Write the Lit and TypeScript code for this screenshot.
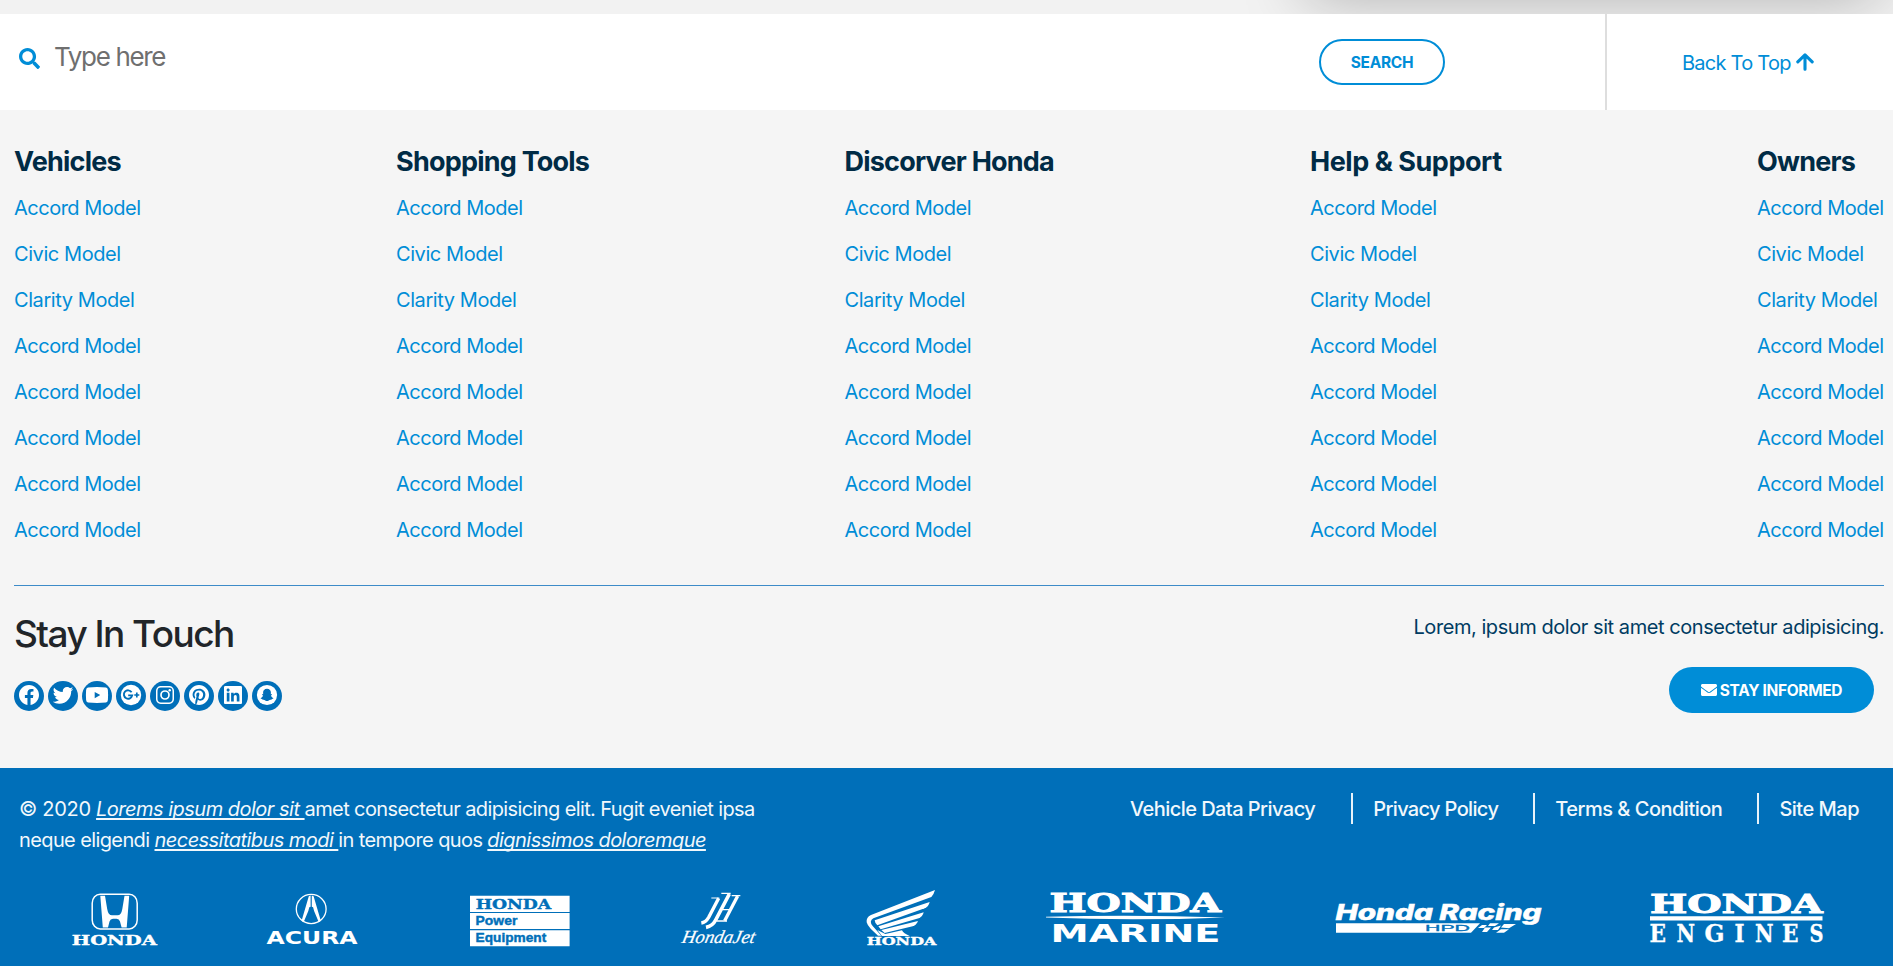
import { LitElement, html, svg, css } from "lit";
import { customElement } from "lit/decorators.js";

const MODELS = ["Accord Model", "Civic Model", "Clarity Model", "Accord Model", "Accord Model", "Accord Model", "Accord Model", "Accord Model"];
const COLUMNS = ["Vehicles", "Shopping Tools", "Discorver Honda", "Help & Support", "Owners"];
const LEGAL = ["Vehicle Data Privacy", "Privacy Policy", "Terms & Condition", "Site Map"];

const BLUE = "#006fb9";

const word = (t: string, x: number, y: number, w: number, size: number, cls: string) =>
  svg`<text class=${cls} x=${x} y=${y} font-size=${size} textLength=${w} lengthAdjust="spacingAndGlyphs">${t}</text>`;

const SOCIAL = [
  svg`<svg x="5" y="4" width="20" height="20" viewBox="8 8 496 496"><path d="M504 256C504 119 393 8 256 8S8 119 8 256c0 123.78 90.69 226.38 209.25 245V327.69h-63V256h63v-54.64c0-62.15 37-96.48 93.67-96.48 27.14 0 55.52 4.84 55.52 4.84v61h-31.28c-30.8 0-40.41 19.12-40.41 38.73V256h68.78l-11 71.69h-57.78V501C413.31 482.38 504 379.78 504 256z"/></svg>`,
  svg`<svg x="4.7" y="4" width="20.6" height="20.6" viewBox="0 0 512 512"><path d="M459.37 151.716c.325 4.548.325 9.097.325 13.645 0 138.72-105.583 298.558-298.558 298.558-59.452 0-114.68-17.219-161.137-47.106 8.447.974 16.568 1.299 25.34 1.299 49.055 0 94.213-16.568 130.274-44.832-46.132-.975-84.792-31.188-98.112-72.772 6.498.974 12.995 1.624 19.818 1.624 9.421 0 18.843-1.3 27.614-3.573-48.081-9.747-84.143-51.98-84.143-102.985v-1.299c13.969 7.797 30.214 12.67 47.431 13.319-28.264-18.843-46.781-51.005-46.781-87.391 0-19.492 5.197-37.36 14.294-52.954 51.655 63.675 129.3 105.258 216.365 109.807-1.624-7.797-2.599-15.918-2.599-24.04 0-57.828 46.782-104.934 104.934-104.934 30.213 0 57.502 12.67 76.67 33.137 23.715-4.548 46.456-13.32 66.599-25.34-7.798 24.366-24.366 44.833-46.132 57.827 21.117-2.273 41.584-8.122 60.426-16.243-14.292 20.791-32.161 39.308-52.628 54.253z"/></svg>`,
  svg`<path d="M6 6.5Q15 5.5 24 6.5Q25.7 6.8 25.9 9Q26.3 14 25.9 19Q25.7 21.3 24 21.6Q15 22.4 6 21.6Q4.3 21.3 4.1 19Q3.7 14 4.1 9Q4.3 6.8 6 6.5ZM12.7 10.9V17.3L18.3 14.1Z" fill-rule="evenodd"/>`,
  svg`<circle cx="15" cy="14" r="10.2"/><path d="M15.6 11.2A4.2 4.2 0 1 0 16.2 14.4H12.2" fill="none" stroke=${BLUE} stroke-width="1.9"/><path d="M18.3 14H23.3M20.8 11.5V16.5" stroke=${BLUE} stroke-width="1.7"/>`,
  svg`<path fill-rule="evenodd" d="M10.7 5H19.3A4.7 4.7 0 0 1 24 9.7V18.3A4.7 4.7 0 0 1 19.3 23H10.7A4.7 4.7 0 0 1 6 18.3V9.7A4.7 4.7 0 0 1 10.7 5ZM10.9 6.5A3.4 3.4 0 0 0 7.5 9.9V18.1A3.4 3.4 0 0 0 10.9 21.5H19.1A3.4 3.4 0 0 0 22.5 18.1V9.9A3.4 3.4 0 0 0 19.1 6.5Z"/><circle cx="15" cy="14" r="4" fill="none" stroke="#fff" stroke-width="1.7"/><circle cx="19.7" cy="9.2" r="1.2"/>`,
  svg`<svg x="5" y="4" width="20" height="20" viewBox="0 8 496 496"><path d="M496 256c0 137-111 248-248 248-25.6 0-50.2-3.9-73.4-11.1 10.1-16.5 25.2-43.5 30.8-65 3-11.6 15.4-59 15.4-59 8.1 15.4 31.7 28.5 56.8 28.5 74.8 0 128.7-68.8 128.7-154.3 0-81.9-66.9-143.2-152.9-143.2-107 0-163.9 71.8-163.9 150.1 0 36.4 19.4 81.7 50.3 96.1 4.7 2.2 7.2 1.2 8.3-3.3.8-3.4 5-20.3 6.9-28.1.6-2.5.3-4.7-1.7-7.1-10.1-12.5-18.3-35.3-18.3-56.6 0-54.7 41.4-107.6 112-107.6 60.9 0 103.6 41.5 103.6 100.9 0 67.1-33.9 113.6-78 113.6-24.3 0-42.6-20.1-36.7-44.8 7-29.5 20.5-61.3 20.5-82.6 0-19-10.2-34.9-31.4-34.9-24.9 0-44.9 25.7-44.9 60.2 0 22 7.4 36.8 7.4 36.8s-24.5 103.8-29 123.2c-5 21.4-3 51.6-.9 71.2C65.4 450.9 0 361.1 0 256 0 119 111 8 248 8s248 111 248 248z"/></svg>`,
  svg`<svg x="6" y="5" width="18" height="18" viewBox="0 32 448 448"><path d="M416 32H31.9C14.3 32 0 46.5 0 64.3v383.4C0 465.5 14.3 480 31.9 480H416c17.6 0 32-14.5 32-32.3V64.3c0-17.8-14.4-32.3-32-32.3zM135.4 416H69V202.2h66.5V416zm-33.2-243c-21.3 0-38.5-17.3-38.5-38.5S80.9 96 102.2 96c21.2 0 38.5 17.3 38.5 38.5 0 21.3-17.2 38.5-38.5 38.5zm282.1 243h-66.4V312c0-24.8-.5-56.7-34.5-56.7-34.6 0-39.9 27-39.9 54.9V416h-66.4V202.2h63.7v29.2h.9c8.9-16.8 30.6-34.5 62.9-34.5 67.2 0 79.7 44.3 79.7 101.9V416z"/></svg>`,
  svg`<circle cx="15" cy="14" r="10.1"/><path fill=${BLUE} d="M15 7.8C17.6 7.8 18.9 9.6 18.9 11.6L18.8 13.3L20 13.2C20.3 13.7 19.7 14 18.9 14.4C19.2 15.6 20.2 16.6 21.4 17C21.4 17.7 20.3 17.9 19.7 18L19.3 18.9C18.3 18.6 17.6 18.8 16.8 19.4C15.6 20.2 14.4 20.2 13.2 19.4C12.4 18.8 11.7 18.6 10.7 18.9L10.3 18C9.7 17.9 8.6 17.7 8.6 17C9.8 16.6 10.8 15.6 11.1 14.4C10.3 14 9.7 13.7 10 13.2L11.2 13.3L11.1 11.6C11.1 9.6 12.4 7.8 15 7.8Z"/>`,
];

/* Each badge occupies one cell of the strip; [left edge, width, drawing]. */
const LOGOS: [number, number, unknown][] = [
  [0, 210, svg`<rect x="92.2" y="894.2" width="45" height="34.8" rx="8" ry="9" fill="none" stroke="#fff" stroke-width="1.5"/>
    <path d="M100.3 895.8H105L107.2 909Q108.2 915.3 112 915.3H117.5Q121.3 915.3 122.3 909L124.5 895.8H129.2L126.7 927.5H121.6L120 921.5Q119.2 918.8 116.5 918.8H113Q110.3 918.8 109.5 921.5L108 927.5H102.8Z"/>
    ${word("HONDA", 71.8, 945, 85, 12.5, "slab")}`],
  [210, 210, svg`<ellipse cx="311.2" cy="909" rx="14.9" ry="14.6" fill="none" stroke="#fff" stroke-width="1.3"/>
    <path d="M308.8 896.3L310.6 895.5V906.8L309.3 907.2L308.3 911L303.6 922.2L301.6 920.8ZM313.6 896.3L311.8 895.5V906.8L313.1 907.2L314.1 911L318.8 922.2L320.8 920.8Z"/>
    ${word("ACURA", 266.5, 944.2, 91, 18.5, "wide")}`],
  [420, 210, svg`<path d="M470 895.7H569.6V911.9H470ZM470 913.1H569.6V929.1H470ZM470 930.2H569.6V946.3H470Z"/>
    <g fill=${BLUE}>${word("HONDA", 475.7, 909, 75.5, 12.3, "slab ink")}${word("Power", 475.6, 925.3, 41.7, 12.2, "grot")}${word("Equipment", 475.6, 942, 70.6, 12.2, "grot")}</g>`],
  [630, 175, svg`<g transform="translate(450 880) scale(.33333)" fill="none" stroke="#fff">
      <path d="M806 55L776 112Q767 127 754 129" stroke-width="10"/><path d="M784 54H808M814 40H842M845 47H871" stroke-width="3.5"/>
      <path d="M838 42L797 120Q788 138 768 142" stroke-width="11"/><path d="M863 48L824 122" stroke-width="10"/><path d="M800 123H831M818 89H842" stroke-width="4"/></g>
    <g transform="translate(681 942.7) skewX(-12)">${word("HondaJet", 0, 0, 73, 18.5, "script")}</g>`],
  [805, 185, svg`<g transform="translate(840 880) scale(.33333)">
      <path d="M285 30L93 105Q78 112 80 127Q82 136 92 146L114 167H124L98 138Q86 124 100 115L274 51Q282 42 285 30Z"/>
      <path d="M269 66Q266 80 254 85L112 136Q104 127 104 121Z"/>
      <path d="M251 97Q248 111 236 115L122 148L115 139Z"/>
      <path d="M234 123Q230 135 218 139L134 159L124 150Z"/>
      <path d="M136 162L186 151Q190 160 209 168H126L112 150Z"/></g>
    ${word("HONDA", 866.7, 944.8, 69.6, 10.8, "slab")}`],
  [990, 290, svg`${word("HONDA", 1049.5, 911.9, 171.5, 26.6, "slab bold")}
    <path d="M1046 916.7Q1135 914.3 1225 917.4Q1135 921 1046 917.6Z"/>
    ${word("MARINE", 1050.5, 942, 170, 24.3, "wide")}`],
  [1280, 320, svg`${word("Honda Racing", 1335.5, 920.2, 206, 21, "race")}
    <path d="M1336 923.2H1480L1471 932.7H1336Z"/>
    <g fill=${BLUE} stroke=${BLUE}>${word("HPD", 1425, 931.2, 45, 9.8, "thin")}</g>
    <path d="M1482 925H1487L1484 928H1478ZM1490 923.2H1499L1495 926H1488ZM1504 924H1516L1509 928.3L1501 927.5ZM1485 927.5H1491L1487 932H1482ZM1494 927.5L1501 925.5L1498 930H1492ZM1501 929.3H1509L1504 932.7H1496Z"/>`],
  [1600, 293, svg`${word("HONDA", 1650, 912.6, 172.5, 26.9, "slab bold")}<path d="M1650 916.3H1822.5V920.4H1650Z"/>
    ${word("E", 1649.5, 942, 16.5, 25, "slab")}${word("N", 1676.5, 942, 18.5, 25, "slab")}${word("G", 1704.5, 942, 20, 25, "slab")}${word("I", 1734.5, 942, 10, 25, "slab")}${word("N", 1755, 942, 18.5, 25, "slab")}${word("E", 1782, 942, 16.5, 25, "slab")}${word("S", 1809.5, 942, 14, 25, "slab")}`],
];

@customElement("app-root")
export class AppRoot extends LitElement {
  static styles = css`
    :host { display: block; width: 1893px; height: 966px; overflow: hidden; background: #f5f5f5; font-family: Inter, "Liberation Sans", sans-serif; color: #212529; }
    * { box-sizing: border-box; }
    a { color: inherit; text-decoration: none; white-space: nowrap; }
    svg { display: block; }
    .edge { height: 14px; background: #f2f2f2; position: relative; overflow: hidden; }
    .edge::before { content: ""; position: absolute; left: 1306px; right: 14px; top: -150px; height: 148px; box-shadow: 0 0 64px rgba(0, 0, 0, .28); }
    .bar { height: 96px; background: #fff; display: flex; }
    .find { width: 1605px; padding: 0 160px 0 19px; display: flex; align-items: center; }
    .find svg { width: 21px; height: 21px; fill: #008dd7; margin: -8px 14px 0 0; }
    .hint { flex: 1; font-size: 26px; color: #6f6f6f; line-height: 32px; margin-top: -11px; letter-spacing: -1.35px; }
    .search { width: 126px; height: 46px; border: 2px solid #008dd7; border-radius: 23px; background: #fff; color: #008dd7; font: 700 15.5px Inter, sans-serif; padding: 0; letter-spacing: -.3px; }
    .top { flex: 1; border-left: 2px solid #dedede; color: #008dd7; font-size: 20px; display: flex; align-items: center; padding: 2px 0 0 75px; gap: 5px; letter-spacing: -.75px; }
    .top svg { width: 18px; height: 18px; margin-top: -2px; }
    .cols { display: grid; grid-template-columns: 382px 448.5px 465.5px 447px 1fr; padding: 35px 9px 0 14px; height: 475px; }
    h3 { margin: 0 0 15px; font-size: 27px; line-height: 33px; font-weight: 700; color: #002b45; white-space: nowrap; letter-spacing: -.78px; }
    .cols div:nth-child(4) h3 { letter-spacing: -.46px; }
    ul { list-style: none; margin: 0; padding: 0; }
    .cols li { height: 46px; line-height: 30px; font-size: 20px; color: #008dd7; letter-spacing: -.5px; }
    .cols li:nth-child(2), .cols li:nth-child(3) { letter-spacing: -.42px; }
    .touch { margin: 0 9px 0 14px; border-top: 1px solid #3d8bc8; height: 183px; display: flex; justify-content: space-between; }
    h2 { margin: 24px 0 24px; font-size: 37px; line-height: 47px; font-weight: 550; letter-spacing: -1.55px; }
    .social { display: flex; gap: 4px; }
    .badge { width: 30px; height: 30px; border-radius: 50%; background: #006fb9; fill: #fff; }
    .news { display: flex; flex-direction: column; align-items: flex-end; }
    .news p { margin: 26px 0 25px; font-size: 20px; line-height: 30px; color: #003c62; white-space: nowrap; letter-spacing: -.44px; }
    .inform { width: 205px; height: 46px; border: 0; border-radius: 23px; margin-right: 10px; background: #008dd7; color: #fff; font: 700 15.5px Inter, sans-serif; letter-spacing: -.35px; display: flex; align-items: center; justify-content: center; gap: 3px; padding: 0; }
    .inform svg { width: 16px; height: 16px; fill: #fff; }
    .foot { background: #006fb9; color: #f2f8fc; height: 198px; font-size: 20px; }
    .line { display: flex; justify-content: space-between; padding: 25px 34px 0 19px; height: 115px; }
    .copy { line-height: 31px; white-space: nowrap; letter-spacing: -.61px; padding-top: 1px; }
    .copy .year { letter-spacing: -.3px; }
    .copy a { font-style: italic; text-decoration: underline; text-decoration-thickness: 2px; text-underline-offset: 2px; text-decoration-skip-ink: none; white-space: pre; letter-spacing: -.51px; }
    .copy div + div a { letter-spacing: -.55px; }
    .legal { display: flex; font-weight: 500; letter-spacing: -.5px; }
    .legal li { height: 31px; line-height: 33px; border-left: 2px solid #e8f2f9; margin-left: 36px; padding-left: 20px; }
    .legal li:first-child { border: 0; letter-spacing: -.55px; }
    .legal li:nth-child(2) { letter-spacing: -.65px; }
    .legal li:nth-child(n + 3) { margin-left: 35px; }
    .logos { display: flex; height: 83px; fill: #fff; }
    .logos > svg { flex: none; height: 83px; }
    .slab { font-family: "DejaVu Serif", serif; font-weight: 700; stroke: #fff; stroke-width: .35px; }
    .slab.bold { stroke-width: 1px; }
    .slab.ink { stroke: #006fb9; }
    .wide { font-family: "DejaVu Sans", sans-serif; font-weight: 700; }
    .grot { font-family: "Liberation Sans", sans-serif; font-weight: 700; stroke: #006fb9; stroke-width: .4px; }
    .thin { font-family: "Liberation Sans", sans-serif; stroke-width: .3px; }
    .script { font-family: "Liberation Serif", serif; font-style: italic; stroke: #fff; stroke-width: .2px; }
    .race { font-family: Inter, sans-serif; font-weight: 800; font-style: italic; stroke: #fff; stroke-width: .5px; }
  `;

  render() {
    return html`
      <div class="edge"></div>
      <div class="bar">
        <div class="find">
          <svg viewBox="0 0 512 512"><path d="M505 442.7L405.3 343c-4.5-4.5-10.6-7-17-7H372c27.6-35.3 44-79.7 44-128C416 93.1 322.9 0 208 0S0 93.1 0 208s93.1 208 208 208c48.3 0 92.7-16.4 128-44v16.3c0 6.4 2.5 12.5 7 17l99.7 99.7c9.4 9.4 24.6 9.4 33.9 0l28.3-28.3c9.4-9.4 9.4-24.6.1-34zM208 336c-70.7 0-128-57.2-128-128 0-70.7 57.2-128 128-128 70.7 0 128 57.2 128 128 0 70.7-57.2 128-128 128z"/></svg>
          <div class="hint">Type here</div>
          <button class="search">SEARCH</button>
        </div>
        <a class="top"><span>Back To Top</span><svg viewBox="0 0 18 18" fill="none" stroke="#008dd7" stroke-width="3.1" stroke-linecap="round" stroke-linejoin="round"><path d="M9 16.3V2M1.8 8.8L9 1.8L16.2 8.8"/></svg></a>
      </div>
      <nav class="cols">
        ${COLUMNS.map((c) => html`<div><h3>${c}</h3><ul>${MODELS.map((m) => html`<li><a>${m}</a></li>`)}</ul></div>`)}
      </nav>
      <section class="touch">
        <div><h2>Stay In Touch</h2><div class="social">${SOCIAL.map((s) => html`<svg class="badge" viewBox="0 0 30 30">${s}</svg>`)}</div></div>
        <div class="news">
          <p>Lorem, ipsum dolor sit amet consectetur adipisicing.</p>
          <button class="inform"><svg viewBox="0 0 512 512"><path d="M502.3 190.8c3.9-3.1 9.7-.2 9.7 4.7V400c0 26.5-21.5 48-48 48H48c-26.5 0-48-21.5-48-48V195.6c0-5 5.7-7.8 9.7-4.7 22.4 17.4 52.1 39.5 154.1 113.6 21.1 15.4 56.7 47.8 92.2 47.6 35.7.3 72-32.8 92.3-47.6 102-74.1 131.6-96.3 154-113.7zM256 320c23.2.4 56.6-29.2 73.4-41.4 132.7-96.3 142.8-104.7 173.4-128.7 5.8-4.5 9.2-11.5 9.2-18.9v-19c0-26.5-21.5-48-48-48H48c-26.5 0-48 21.5-48 48v19c0 7.4 3.4 14.3 9.2 18.9 30.6 23.9 40.7 32.4 173.4 128.7 16.8 12.2 50.2 41.8 73.4 41.4z"/></svg><span>STAY INFORMED</span></button>
        </div>
      </section>
      <footer class="foot">
        <div class="line">
          <div class="copy"><div><span class="year">© 2020 </span><a>Lorems ipsum dolor sit </a>amet consectetur adipisicing elit. Fugit eveniet ipsa</div><div>neque eligendi <a>necessitatibus modi </a>in tempore quos <a>dignissimos doloremque</a></div></div>
          <ul class="legal">${LEGAL.map((l) => html`<li><a>${l}</a></li>`)}</ul>
        </div>
        <div class="logos">${LOGOS.map(([x, w, g]) => html`<svg width=${w} viewBox="${x} 883 ${w} 83">${g}</svg>`)}</div>
      </footer>
    `;
  }
}
